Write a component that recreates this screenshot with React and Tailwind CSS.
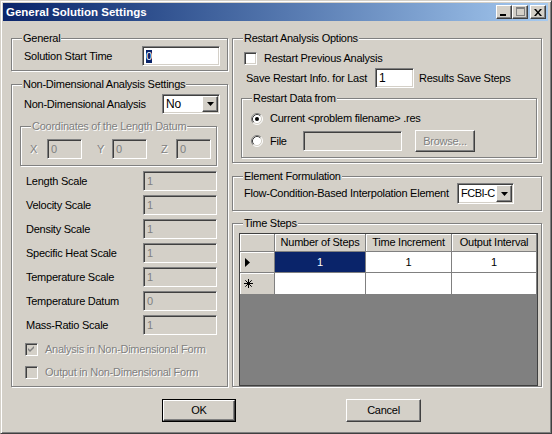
import React from "react";

const SUNKEN =
  "border border-t-[#808080] border-l-[#808080] border-b-white border-r-white shadow-[inset_1px_1px_0_#404040,inset_-1px_-1px_0_#d4d0c8]";
const RAISED =
  "border border-t-white border-l-white border-b-[#404040] border-r-[#404040] shadow-[inset_-1px_-1px_0_#808080]";
const DIS = "text-[#808080] [text-shadow:1px_1px_0_#fff]";

function Group({ label, className, children, disabled }) {
  return (
    <div
      className={
        "relative border border-[#808080] shadow-[inset_1px_1px_0_#fff,1px_1px_0_#fff] " +
        className
      }
    >
      <span
        className={
          "absolute left-[10px] top-[-8px] bg-[#d4d0c8] px-[1px] leading-[14px] whitespace-nowrap " +
          (disabled ? DIS : "")
        }
      >
        {label}
      </span>
      {children}
    </div>
  );
}

function Field({ className, value, disabled, selected }) {
  return (
    <div
      className={
        SUNKEN +
        " flex items-center pl-[3px] leading-[13px] overflow-hidden " +
        (disabled ? "bg-[#d4d0c8] text-[#808080] " : "bg-white ") +
        className
      }
    >
      {selected ? (
        <span className="bg-[#0a246a] text-white px-[0px]">{value}</span>
      ) : (
        value
      )}
    </div>
  );
}

function Arrow() {
  return (
    <svg width="7" height="4" viewBox="0 0 7 4">
      <path d="M0 0H7L3.5 4Z" fill="#000" />
    </svg>
  );
}

function Select({ className, value, textClass }) {
  return (
    <div className={SUNKEN + " bg-white flex items-stretch " + className}>
      <div
        className={
          "flex-1 flex items-center pl-[3px] leading-[13px] whitespace-nowrap overflow-hidden " +
          textClass
        }
      >
        {value}
      </div>
      <div className={RAISED + " bg-[#d4d0c8] w-[16px] shrink-0 m-[1px] flex items-center justify-center"}>
        <Arrow />
      </div>
    </div>
  );
}

function Check({ checked, disabled }) {
  return (
    <div
      className={
        SUNKEN +
        " w-[13px] h-[13px] shrink-0 flex items-center justify-center " +
        (disabled ? "bg-[#d4d0c8]" : "bg-white")
      }
    >
      {checked && (
        <svg width="7" height="7" viewBox="0 0 7 7">
          <path d="M0 2L2 4L6 0V2L2 6L0 4Z" fill={disabled ? "#808080" : "#000"} />
        </svg>
      )}
    </div>
  );
}

function Radio({ checked }) {
  return (
    <svg width="12" height="12" viewBox="0 0 12 12" className="shrink-0">
      <circle cx="6" cy="6" r="5" fill="#fff" />
      <path d="M2.11 9.89A5.5 5.5 0 0 1 9.89 2.11" stroke="#808080" fill="none" />
      <path d="M9.89 2.11A5.5 5.5 0 0 1 2.11 9.89" stroke="#fff" fill="none" />
      <path d="M2.82 9.18A4.5 4.5 0 0 1 9.18 2.82" stroke="#404040" fill="none" />
      <path d="M9.18 2.82A4.5 4.5 0 0 1 2.82 9.18" stroke="#d4d0c8" fill="none" />
      {checked && <circle cx="6" cy="6" r="2" fill="#000" />}
    </svg>
  );
}

function TitleBtn({ children, className }) {
  return (
    <div className={RAISED + " bg-[#d4d0c8] w-[16px] h-[14px] flex items-center justify-center " + className}>
      {children}
    </div>
  );
}

function ScaleRow({ label, value }) {
  return (
    <div className="flex items-center h-[20px] pl-[14px]">
      <div className="w-[117px]">{label}</div>
      <Field className="w-[74px] h-[20px]" value={value} disabled />
    </div>
  );
}

const HEAD =
  "bg-[#d4d0c8] border-r border-b border-[#808080] shadow-[inset_1px_1px_0_#fff] flex items-center justify-center";
const CELL = "bg-white text-black border-r border-b border-[#808080] flex items-center justify-center";

export default function App() {
  return (
    <div className="w-[552px] h-[434px] bg-[#d4d0c8] border border-t-[#d4d0c8] border-l-[#d4d0c8] border-r-[#404040] border-b-[#404040] shadow-[inset_1px_1px_0_#fff,inset_-1px_-1px_0_#808080] p-[2px] flex flex-col font-['Liberation_Sans',Arial,sans-serif] text-[11px] tracking-[-0.25px] text-black leading-[13px] select-none">
      {/* title bar */}
      <div className="h-[18px] w-[545px] bg-linear-to-r from-[#0a246a] to-[#a6caf0] flex items-center pl-[3px] pr-[2px]">
        <div className="flex-1 text-white font-bold text-[11.5px] tracking-[0px] leading-[14px]">
          General Solution Settings
        </div>
        <TitleBtn>
          <div className="w-[6px] h-[2px] bg-black mt-[6px] mr-[2px]" />
        </TitleBtn>
        <TitleBtn>
          <div className="w-[9px] h-[9px] border border-t-2 border-[#808080] mt-[-1px]" />
        </TitleBtn>
        <TitleBtn className="ml-[2px]">
          <svg width="8" height="7" viewBox="0 0 8 7">
            <path d="M0 0H2L4 2.5L6 0H8L5 3.5L8 7H6L4 4.5L2 7H0L3 3.5Z" fill="#000" />
          </svg>
        </TitleBtn>
      </div>

      {/* main */}
      <div className="flex pl-[8px] pt-[17px]">
        {/* left column */}
        <div className="w-[217px] flex flex-col">
          <Group label="General" className="h-[33px]">
            <div className="flex items-center pl-[12px] pt-[7px]">
              <div className="w-[118px]">Solution Start Time</div>
              <Field className="w-[78px] h-[20px]" value="0" selected />
            </div>
          </Group>

          <Group label="Non-Dimensional Analysis Settings" className="h-[303px] mt-[13px]">
            <div className="flex items-center pl-[12px] pt-[9px]">
              <div className="w-[138px]">Non-Dimensional Analysis</div>
              <Select className="w-[58px] h-[20px]" value="No" textClass="text-[12px]" />
            </div>

            <Group
              label="Coordinates of the Length Datum"
              disabled
              className="ml-[8px] mt-[12px] w-[197px] h-[40px]"
            >
              <div className="flex items-center pl-[9px] pt-[12px]">
                <div className={"w-[17px] " + DIS}>X</div>
                <Field className="w-[35px] h-[20px]" value="0" disabled />
                <div className={"ml-[15px] w-[15px] " + DIS}>Y</div>
                <Field className="w-[35px] h-[20px]" value="0" disabled />
                <div className={"ml-[14px] w-[15px] " + DIS}>Z</div>
                <Field className="w-[35px] h-[20px]" value="0" disabled />
              </div>
            </Group>

            <div className="flex flex-col gap-[4px] mt-[5px]">
              <ScaleRow label="Length Scale" value="1" />
              <ScaleRow label="Velocity Scale" value="1" />
              <ScaleRow label="Density Scale" value="1" />
              <ScaleRow label="Specific Heat Scale" value="1" />
              <ScaleRow label="Temperature Scale" value="1" />
              <ScaleRow label="Temperature Datum" value="0" />
              <ScaleRow label="Mass-Ratio Scale" value="1" />
            </div>

            <div className="flex flex-col gap-[10px] mt-[8px] pl-[13px]">
              <div className="flex items-center h-[13px]">
                <Check checked disabled />
                <span className={"ml-[7px] " + DIS}>Analysis in Non-Dimensional Form</span>
              </div>
              <div className="flex items-center h-[13px]">
                <Check disabled />
                <span className={"ml-[7px] " + DIS}>Output in Non-Dimensional Form</span>
              </div>
            </div>
          </Group>
        </div>

        {/* right column */}
        <div className="w-[310px] ml-[4px] flex flex-col">
          <Group label="Restart Analysis Options" className="h-[125px]">
            <div className="flex items-center pl-[11px] pt-[13px] h-[26px]">
              <Check />
              <span className="ml-[7px]">Restart Previous Analysis</span>
            </div>
            <div className="flex items-center pl-[13px] mt-[3px]">
              <div className="w-[129px] whitespace-nowrap">Save Restart Info. for Last</div>
              <Field className="w-[39px] h-[20px] text-[12px]" value="1" />
              <div className="ml-[5px]">Results Save Steps</div>
            </div>

            <Group label="Restart Data from" className="ml-[8px] mt-[10px] w-[296px] h-[60px]">
              <div className="flex items-center pl-[9px] pt-[13px] h-[26px]">
                <Radio checked />
                <span className="ml-[7px]">Current &lt;problem filename&gt; .res</span>
              </div>
              <div className="flex items-center pl-[9px] mt-[5px] h-[22px]">
                <Radio />
                <span className="ml-[7px] w-[33px]">File</span>
                <Field className="w-[99px] h-[20px]" value="" disabled />
                <div
                  className={
                    RAISED + " ml-[13px] w-[60px] h-[22px] flex items-center justify-center " + DIS
                  }
                >
                  Browse...
                </div>
              </div>
            </Group>
          </Group>

          <Group label="Element Formulation" className="h-[35px] mt-[13px]">
            <div className="flex items-center pl-[11px] pt-[6px]">
              <div className="w-[213px] whitespace-nowrap">Flow-Condition-Based Interpolation Element</div>
              <Select
                className="w-[57px] h-[21px]"
                value="FCBI-C"
                textClass="text-[11px] tracking-[-0.5px] pl-[2px]"
              />
            </div>
          </Group>

          <Group label="Time Steps" className="h-[164px] mt-[12px]">
            <div className="pl-[6px] pt-[9px]">
              <div className="w-[299px] h-[153px] border border-[#404040] bg-[#808080] flex flex-col">
                <div className="grid grid-cols-[35px_91px_86px_85px] grid-rows-[18px_21px_22px]">
                  <div className={HEAD} />
                  <div className={HEAD}>Number of Steps</div>
                  <div className={HEAD}>Time Increment</div>
                  <div className={HEAD}>Output Interval</div>

                  <div className={HEAD + " !justify-start pl-[5px]"}>
                    <svg width="5" height="9" viewBox="0 0 5 9">
                      <path d="M0 0L5 4.5L0 9Z" fill="#000" />
                    </svg>
                  </div>
                  <div className="bg-[#0a246a] text-white border-r border-b border-[#808080] flex items-center justify-center">
                    1
                  </div>
                  <div className={CELL}>1</div>
                  <div className={CELL}>1</div>

                  <div className={HEAD + " !justify-start pl-[4px]"}>
                    <svg width="9" height="9" viewBox="0 0 9 9">
                      <path
                        d="M4.5 0V9M0 4.5H9M1.3 1.3L7.7 7.7M7.7 1.3L1.3 7.7"
                        stroke="#000"
                        strokeWidth="1"
                      />
                    </svg>
                  </div>
                  <div className={CELL} />
                  <div className={CELL} />
                  <div className={CELL} />
                </div>
              </div>
            </div>
          </Group>
        </div>
      </div>

      {/* buttons */}
      <div className="flex pl-[159px] mt-[12px]">
        <div className="border border-black">
          <div className={RAISED + " bg-[#d4d0c8] w-[72px] h-[21px] flex items-center justify-center"}>
            OK
          </div>
        </div>
        <div
          className={
            RAISED + " bg-[#d4d0c8] ml-[110px] w-[75px] h-[23px] flex items-center justify-center"
          }
        >
          Cancel
        </div>
      </div>
    </div>
  );
}
